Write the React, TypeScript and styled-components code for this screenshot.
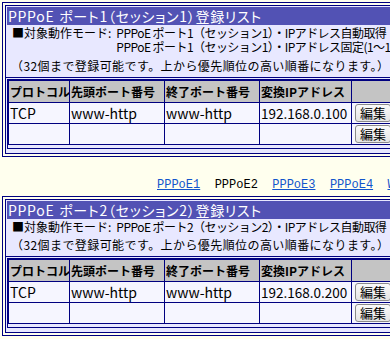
import React from "react";
import styled, { createGlobalStyle } from "styled-components";

const GlobalStyle = createGlobalStyle`
  html, body {
    margin: 0;
    padding: 0;
    background: #ffffee;
    overflow: hidden;
  }
  body {
    font-family: "Noto Sans CJK JP", "Noto Sans", sans-serif;
    font-size: 12px;
    color: #000;
  }
`;

const Page = styled.div`
  padding: 2px 0 0 2px;
  width: 460px;
`;

const Panel = styled.section`
  border: 1px solid #000080;
  padding: 2px;
  width: 440px;
`;

const Inner = styled.div`
  border: 1px solid #000080;
  background: #e8e8ff;
  padding: 1px 1px 2px 1px;
`;

const Title = styled.h2`
  margin: 0;
  background: #5252b4;
  color: #ffffff;
  font-size: 14px;
  font-feature-settings: "palt";
  letter-spacing: 0.7px;
  word-spacing: 1px;
  font-weight: normal;
  line-height: 18px;
  padding: 0 0 0 1px;
  white-space: nowrap;
`;

const Desc = styled.div`
  padding: 1px 0 4px 5px;
  border-bottom: 1px solid #000080;
  margin: 0 -1px 1px -1px;
`;

const Mode = styled.div`
  display: grid;
  grid-template-columns: auto 1fr;
  line-height: 14px;
  white-space: nowrap;
  padding-left: 1px;
`;

const ModeLabel = styled.span`
  padding-right: 5px;
`;

const ModeValues = styled.div`
  display: flex;
  flex-direction: column;
  letter-spacing: -0.55px;
`;

const Note = styled.div<{ $gap: number }>`
  margin-top: ${(p) => p.$gap}px;
  line-height: 14px;
  letter-spacing: 0.42px;
  white-space: nowrap;
`;

const TableWrap = styled.div`
  border: 1px solid #000080;
  padding-bottom: 3px;
  margin-bottom: 2px;
`;

const Table = styled.table`
  border-collapse: collapse;
  table-layout: fixed;
  width: 100%;
  background: #f6f6ff;
`;

const Th = styled.th<{ $w?: number }>`
  ${(p) => (p.$w ? `width: ${p.$w}px;` : "")}
  border: 1px solid #000080;
  background: #c4c4c4;
  font-size: 12px;
  font-weight: bold;
  text-align: left;
  padding: 0 1px;
  height: 21px;
  white-space: nowrap;
  overflow: hidden;
`;

const Td = styled.td<{ $size?: number }>`
  border: 1px solid #000080;
  font-size: ${(p) => p.$size ?? 14}px;
  padding: 0 1px;
  height: 20px;
  white-space: nowrap;
  overflow: hidden;
`;

const ButtonCell = styled.td`
  border: 1px solid #000080;
  padding: 0 3px;
  height: 20px;
`;

const EditButton = styled.button`
  font-family: "Noto Sans CJK JP", sans-serif;
  font-size: 13px;
  line-height: 14px;
  padding: 1px 4px;
  background: linear-gradient(#fafafa, #e4e4e4);
  border: 1px solid #8a8a8a;
  border-radius: 3px;
  color: #000;
`;

const Links = styled.nav`
  height: 39px;
  box-sizing: border-box;
  padding: 21px 0 0 155px;
  line-height: 14px;
  font-family: "Liberation Mono", monospace;
  font-size: 12px;
  white-space: pre;
`;

const Link = styled.a<{ $current?: boolean }>`
  color: ${(p) => (p.$current ? "#000" : "#1155cc")};
  text-decoration: ${(p) => (p.$current ? "none" : "underline")};
`;

type Row = { proto: string; start: string; end: string; ip: string };

function ListPanel({
  port,
  rows,
  modes,
  gap,
}: {
  port: number;
  rows: Row[];
  modes: string[];
  gap: number;
}) {
  return (
    <Panel>
      <Inner>
        <Title>
          PPPoE ポート{port}（セッション{port}）登録リスト
        </Title>
        <Desc>
          <Mode>
            <ModeLabel>■対象動作モード:</ModeLabel>
            <ModeValues>
              {modes.map((m) => (
                <span key={m}>{m}</span>
              ))}
            </ModeValues>
          </Mode>
          <Note $gap={gap}>（32個まで登録可能です。上から優先順位の高い順番になります。）</Note>
        </Desc>
        <TableWrap>
          <Table>
            <thead>
              <tr>
                <Th $w={58}>プロトコル</Th>
                <Th $w={92}>先頭ポート番号</Th>
                <Th $w={92}>終了ポート番号</Th>
                <Th $w={89}>変換IPアドレス</Th>
                <Th></Th>
              </tr>
            </thead>
            <tbody>
              {rows.map((r, i) => (
                <tr key={i}>
                  <Td>{r.proto}</Td>
                  <Td>{r.start}</Td>
                  <Td>{r.end}</Td>
                  <Td $size={13.5}>{r.ip}</Td>
                  <ButtonCell>
                    <EditButton>編集</EditButton>
                  </ButtonCell>
                </tr>
              ))}
            </tbody>
          </Table>
        </TableWrap>
      </Inner>
    </Panel>
  );
}

export default function App() {
  return (
    <Page>
      <GlobalStyle />
      <ListPanel
        port={1}
        gap={5}
        modes={[
          "PPPoE ポート1（セッション1）・IPアドレス自動取得",
          "PPPoE ポート1（セッション1）・IPアドレス固定(1〜1)",
        ]}
        rows={[
          { proto: "TCP", start: "www-http", end: "www-http", ip: "192.168.0.100" },
          { proto: "", start: "", end: "", ip: "" },
        ]}
      />
      <Links>
        <Link href="#p1">PPPoE1</Link>
        {"  "}
        <Link $current>PPPoE2</Link>
        {"  "}
        <Link href="#p3">PPPoE3</Link>
        {"  "}
        <Link href="#p4">PPPoE4</Link>
        {"  "}
        <Link href="#w">WAN</Link>
      </Links>
      <ListPanel
        port={2}
        gap={4}
        modes={["PPPoE ポート2（セッション2）・IPアドレス自動取得"]}
        rows={[
          { proto: "TCP", start: "www-http", end: "www-http", ip: "192.168.0.200" },
          { proto: "", start: "", end: "", ip: "" },
        ]}
      />
    </Page>
  );
}
